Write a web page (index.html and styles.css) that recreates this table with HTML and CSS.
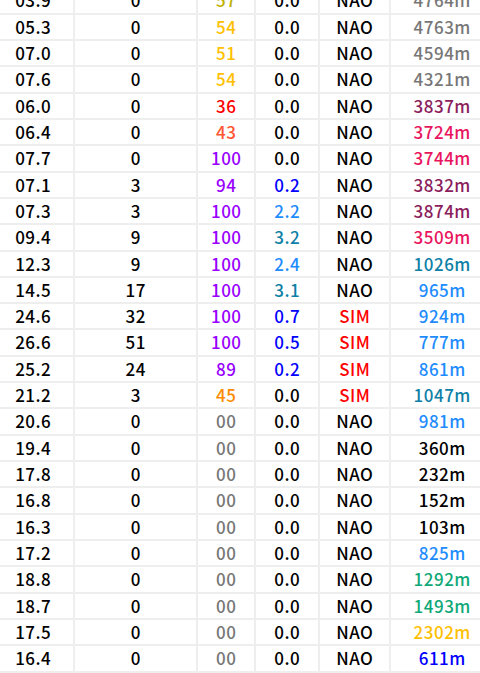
FILE: index.html
```html
<!DOCTYPE html>
<html lang="pt">
<head>
<meta charset="utf-8">
<title>Tabela</title>
<link rel="stylesheet" href="styles.css">
</head>
<body>
<div class="scroller">
<table class="grid">
<colgroup>
<col class="c1"><col class="c2"><col class="c3"><col class="c4"><col class="c5"><col class="c6">
</colgroup>
<tbody>
<tr><td>03.9</td><td>0</td><td class="olive">57</td><td>0.0</td><td>NAO</td><td class="grey">4764m</td></tr>
<tr><td>05.3</td><td>0</td><td class="amber">54</td><td>0.0</td><td>NAO</td><td class="grey">4763m</td></tr>
<tr><td>07.0</td><td>0</td><td class="amber">51</td><td>0.0</td><td>NAO</td><td class="grey">4594m</td></tr>
<tr><td>07.6</td><td>0</td><td class="amber">54</td><td>0.0</td><td>NAO</td><td class="grey">4321m</td></tr>
<tr><td>06.0</td><td>0</td><td class="red">36</td><td>0.0</td><td>NAO</td><td class="maroon">3837m</td></tr>
<tr><td>06.4</td><td>0</td><td class="tomato">43</td><td>0.0</td><td>NAO</td><td class="pink">3724m</td></tr>
<tr><td>07.7</td><td>0</td><td class="purple">100</td><td>0.0</td><td>NAO</td><td class="pink">3744m</td></tr>
<tr><td>07.1</td><td>3</td><td class="purple">94</td><td class="blue">0.2</td><td>NAO</td><td class="maroon">3832m</td></tr>
<tr><td>07.3</td><td>3</td><td class="purple">100</td><td class="sky">2.2</td><td>NAO</td><td class="maroon">3874m</td></tr>
<tr><td>09.4</td><td>9</td><td class="purple">100</td><td class="teal">3.2</td><td>NAO</td><td class="pink">3509m</td></tr>
<tr><td>12.3</td><td>9</td><td class="purple">100</td><td class="sky">2.4</td><td>NAO</td><td class="teal">1026m</td></tr>
<tr><td>14.5</td><td>17</td><td class="purple">100</td><td class="teal">3.1</td><td>NAO</td><td class="sky">965m</td></tr>
<tr><td>24.6</td><td>32</td><td class="purple">100</td><td class="blue">0.7</td><td class="red">SIM</td><td class="sky">924m</td></tr>
<tr><td>26.6</td><td>51</td><td class="purple">100</td><td class="blue">0.5</td><td class="red">SIM</td><td class="sky">777m</td></tr>
<tr><td>25.2</td><td>24</td><td class="purple">89</td><td class="blue">0.2</td><td class="red">SIM</td><td class="sky">861m</td></tr>
<tr><td>21.2</td><td>3</td><td class="orange">45</td><td>0.0</td><td class="red">SIM</td><td class="teal">1047m</td></tr>
<tr><td>20.6</td><td>0</td><td class="grey">00</td><td>0.0</td><td>NAO</td><td class="sky">981m</td></tr>
<tr><td>19.4</td><td>0</td><td class="grey">00</td><td>0.0</td><td>NAO</td><td>360m</td></tr>
<tr><td>17.8</td><td>0</td><td class="grey">00</td><td>0.0</td><td>NAO</td><td>232m</td></tr>
<tr><td>16.8</td><td>0</td><td class="grey">00</td><td>0.0</td><td>NAO</td><td>152m</td></tr>
<tr><td>16.3</td><td>0</td><td class="grey">00</td><td>0.0</td><td>NAO</td><td>103m</td></tr>
<tr><td>17.2</td><td>0</td><td class="grey">00</td><td>0.0</td><td>NAO</td><td class="sky">825m</td></tr>
<tr><td>18.8</td><td>0</td><td class="grey">00</td><td>0.0</td><td>NAO</td><td class="green">1292m</td></tr>
<tr><td>18.7</td><td>0</td><td class="grey">00</td><td>0.0</td><td>NAO</td><td class="green">1493m</td></tr>
<tr><td>17.5</td><td>0</td><td class="grey">00</td><td>0.0</td><td>NAO</td><td class="amber">2302m</td></tr>
<tr><td>16.4</td><td>0</td><td class="grey">00</td><td>0.0</td><td>NAO</td><td class="blue">611m</td></tr>
</tbody>
</table>
</div>
</body>
</html>
```
FILE: styles.css
```css
html, body {
  margin: 0;
  padding: 0;
  background: #ffffff;
}

.scroller {
  width: 480px;
  height: 673px;
  overflow: hidden;
}

.grid {
  margin-top: -13.6px;
  margin-left: -9px;
  border-collapse: collapse;
  table-layout: fixed;
  width: 502px;
  font-family: "Noto Sans CJK JP", "Noto Sans", sans-serif;
  font-weight: 500;
  font-size: 17px;
  letter-spacing: 0.5px;
  color: #000;
}

.c1 { width: 82px; }
.c2 { width: 123px; }
.c3 { width: 58px; }
.c4 { width: 64px; }
.c5 { width: 71px; }
.c6 { width: 104px; }

.grid td {
  border: 2px solid #eeeeee;
  height: 24.32px;
  padding: 0 0 0 0.5px;
  line-height: 24.32px;
  text-align: center;
  white-space: nowrap;
}

.olive { color: #bdb000; }
.amber { color: #ffc000; }
.red { color: #ff0000; }
.tomato { color: #ff5533; }
.orange { color: #ff8c00; }
.purple { color: #9900ff; }
.grey { color: #777777; }
.blue { color: #0000ff; }
.sky { color: #1e8cff; }
.teal { color: #0e7fa6; }
.maroon { color: #8b1d5c; }
.pink { color: #e8155e; }
.green { color: #10a877; }
```
